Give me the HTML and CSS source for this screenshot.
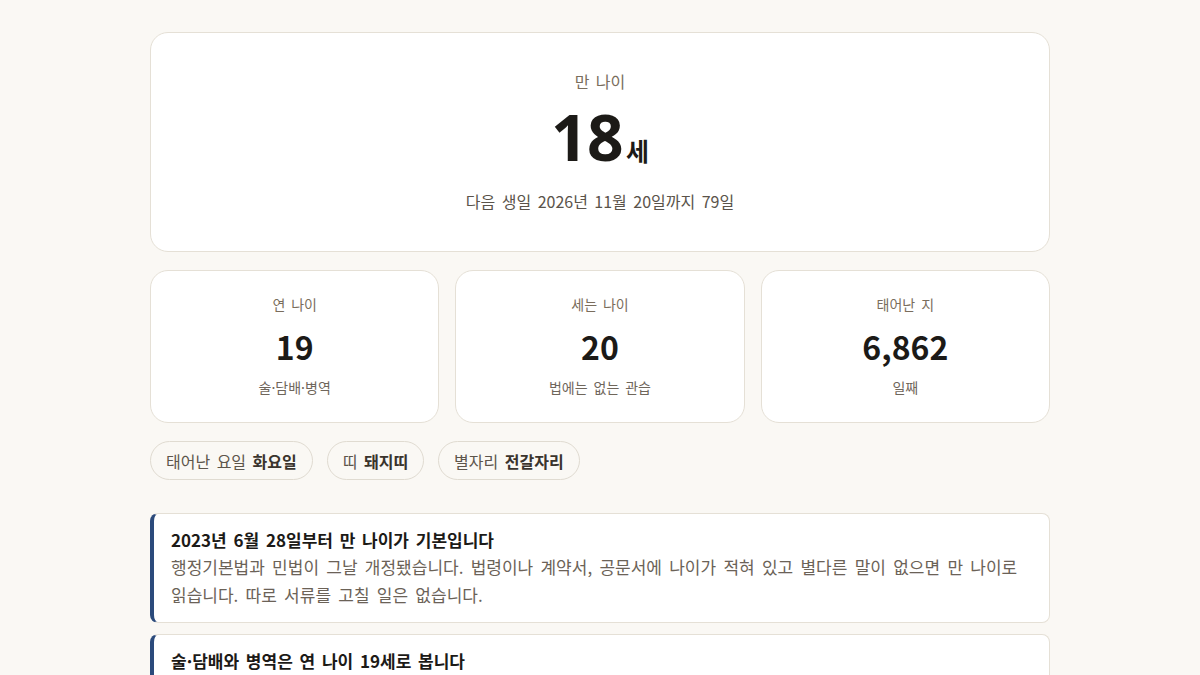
FILE: index.html
```html
<!DOCTYPE html>
<html lang="ko">
<head>
<meta charset="utf-8">
<title>만 나이 계산</title>
<link rel="stylesheet" href="styles.css">
</head>
<body>
<main class="wrap">
  <section class="hero">
    <div class="hero-label">만 나이</div>
    <div class="hero-value"><span class="num">18</span><span class="unit">세</span></div>
    <div class="hero-sub">다음 생일 2026년 11월 20일까지 79일</div>
  </section>

  <section class="cards">
    <div class="card">
      <div class="card-label">연 나이</div>
      <div class="card-value">19</div>
      <div class="card-sub">술·담배·병역</div>
    </div>
    <div class="card">
      <div class="card-label">세는 나이</div>
      <div class="card-value">20</div>
      <div class="card-sub">법에는 없는 관습</div>
    </div>
    <div class="card">
      <div class="card-label">태어난 지</div>
      <div class="card-value">6,862</div>
      <div class="card-sub">일째</div>
    </div>
  </section>

  <section class="pills">
    <span class="pill">태어난 요일 <b>화요일</b></span>
    <span class="pill">띠 <b>돼지띠</b></span>
    <span class="pill">별자리 <b>전갈자리</b></span>
  </section>

  <section class="notes">
    <article class="note">
      <h3 class="note-title">2023년 6월 28일부터 만 나이가 기본입니다</h3>
      <p class="note-body">행정기본법과 민법이 그날 개정됐습니다. 법령이나 계약서, 공문서에 나이가 적혀 있고 별다른 말이 없으면 만 나이로 읽습니다. 따로 서류를 고칠 일은 없습니다.</p>
    </article>
    <article class="note">
      <h3 class="note-title">술·담배와 병역은 연 나이 19세로 봅니다</h3>
      <p class="note-body">청소년보호법과 병역법은 개정 대상에서 빠졌습니다. 그해 1월 1일이 지나면 생일과 상관없이 같은 나이로 셉니다.</p>
    </article>
  </section>
</main>
</body>
</html>
```

FILE: styles.css
```css
* { box-sizing: border-box; }

html, body {
  margin: 0;
  padding: 0;
  background: #faf8f4;
}

body {
  font-family: "Noto Sans CJK KR", "Noto Sans", sans-serif;
  color: #1c1a17;
  word-spacing: 2px;
  word-break: keep-all;
}

.wrap {
  width: 900px;
  margin: 0 auto;
  padding-top: 32px;
  display: flex;
  flex-direction: column;
}

.hero {
  background: #ffffff;
  border: 1px solid #e5e0d6;
  border-radius: 18px;
  height: 220px;
  display: flex;
  flex-direction: column;
  align-items: center;
  padding-top: 36px;
}

.hero-label {
  font-size: 16px;
  line-height: 24px;
  color: #7a6d5c;
}

.hero-value {
  display: flex;
  align-items: baseline;
  height: 87px;
}

.hero-value .num {
  font-family: "Noto Sans", "Noto Sans CJK KR", sans-serif;
  font-size: 64px;
  font-weight: 700;
  line-height: 87px;
  letter-spacing: -0.5px;
}

.hero-value .unit {
  font-size: 25px;
  font-weight: 700;
  line-height: 1;
  margin-left: 3px;
}

.hero-sub {
  margin-top: 9px;
  font-size: 16px;
  line-height: 24px;
  color: #5a534a;
}

.cards {
  margin-top: 18px;
  display: grid;
  grid-template-columns: repeat(3, 1fr);
  gap: 16px;
}

.card {
  background: #ffffff;
  border: 1px solid #e5e0d6;
  border-radius: 18px;
  height: 153px;
  display: flex;
  flex-direction: column;
  align-items: center;
  padding-top: 23px;
}

.card-label {
  font-size: 14px;
  line-height: 21px;
  color: #7a6d5c;
}

.card-value {
  margin-top: 8px;
  font-size: 32px;
  font-weight: 700;
  line-height: 47px;
  word-spacing: 0;
}

.card-sub {
  margin-top: 7px;
  font-size: 14px;
  line-height: 21px;
  color: #6f665b;
}

.pills {
  margin-top: 18px;
  display: flex;
  gap: 14px;
}

.pill {
  height: 39px;
  display: inline-flex;
  align-items: center;
  padding: 0 15px;
  border: 1px solid #e0dbd1;
  border-radius: 999px;
  background: #faf8f4;
  font-size: 16px;
  color: #5d554b;
  white-space: pre;
}

.pill b {
  color: #3a342d;
  font-weight: 700;
}

.notes {
  margin-top: 33px;
  display: flex;
  flex-direction: column;
  gap: 11px;
}

.note {
  background: #ffffff;
  border: 1px solid #e5e0d6;
  border-left: 4px solid #2b4a7b;
  border-radius: 8px;
  padding: 13px 20px 13px 17px;
}

.note-title {
  margin: 0;
  font-size: 17px;
  font-weight: 700;
  line-height: 25px;
  color: #1c1a17;
}

.note-body {
  margin: 1px 0 0;
  font-size: 17px;
  line-height: 28px;
  color: #6b6257;
  word-spacing: 2.5px;
}
```
